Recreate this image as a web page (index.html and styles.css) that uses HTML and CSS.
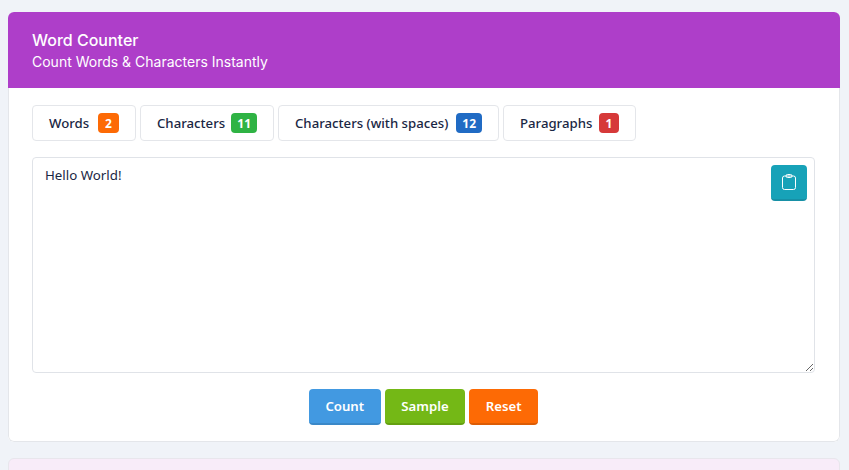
FILE: index.html
```html
<!DOCTYPE html>
<html lang="en">
<head>
<meta charset="utf-8">
<title>Word Counter</title>
<link rel="stylesheet" href="styles.css">
</head>
<body>
<main class="page">
  <section class="card">
    <header class="card-head">
      <h1 class="title">Word Counter</h1>
      <p class="subtitle">Count Words &amp; Characters Instantly</p>
    </header>
    <div class="card-body">
      <div class="stats">
        <div class="stat">Words <span class="badge orange">2</span></div>
        <div class="stat">Characters <span class="badge green">11</span></div>
        <div class="stat">Characters (with spaces) <span class="badge blue">12</span></div>
        <div class="stat">Paragraphs <span class="badge red">1</span></div>
      </div>
      <div class="editor">
        <textarea class="input" spellcheck="false">Hello World!</textarea>
        <button class="paste" type="button" aria-label="Paste">
          <svg width="16" height="18" viewBox="0 0 16 18" fill="none" stroke="currentColor" stroke-width="1" stroke-linejoin="round"><rect x="1.5" y="3" width="13" height="13.5" rx="2"/><rect x="5" y="1.5" width="6" height="3" rx="1.4"/></svg>
        </button>
      </div>
      <div class="actions">
        <button class="btn sky" type="button">Count</button>
        <button class="btn lime" type="button">Sample</button>
        <button class="btn flame" type="button">Reset</button>
      </div>
    </div>
  </section>
  <section class="next-card"></section>
</main>
</body>
</html>
```
FILE: styles.css
```css
* { box-sizing: border-box; }
html, body { margin: 0; height: 470px; overflow: hidden; }
body { background: #f0f3f8; font-family: "Noto Sans", sans-serif; color: #1a2744; }
.page { height: 470px; overflow: hidden; padding: 12px 9px 0 8px; display: flex; flex-direction: column; gap: 16px; }
.card { border-radius: 6px; overflow: hidden; height: 430px; flex: none; background: #fff; }
.card-head { background: #ae3ec9; color: #fff; height: 76px; padding: 18px 24px 0; font-family: Inter, sans-serif; }
.title { margin: 0; font-size: 16px; line-height: 20px; font-weight: 500; }
.subtitle { margin: 2px 0 0; font-size: 14px; line-height: 20px; font-weight: 400; }
.card-body { height: 354px; padding: 17px 24px 0 23px; border: 1px solid #e4e6ea; border-top: 0; border-radius: 0 0 6px 6px; }
.stats { display: grid; grid-template-columns: 104px 134px 221px 133px; gap: 4px; }
.stat { height: 36px; display: flex; align-items: center; justify-content: space-between; padding: 0 16px; background: #fff; border: 1px solid #e4e6ea; border-radius: 4px; font-size: 13.2px; font-weight: 500; white-space: nowrap; }
.badge { min-width: 20px; height: 20px; padding: 0 6px; display: flex; align-items: center; justify-content: center; border-radius: 4px; color: #fff; font-size: 12px; font-weight: 700; }
.orange { background: #fd6a05; min-width: 21px; }
.green { background: #2fb344; }
.blue { background: #206bc4; }
.red { background: #d63939; }
.editor { position: relative; margin-top: 16px; height: 216px; }
.input { display: block; width: 100%; height: 216px; padding: 7px 12px; border: 1px solid #e0e3e8; border-radius: 4px; background: #fff; color: #1a2744; font: 400 13.3px/20px "Noto Sans", sans-serif; outline: none; resize: vertical; }
.paste { position: absolute; top: 8px; right: 8px; width: 36px; height: 36px; padding: 0; display: flex; align-items: center; justify-content: center; border: 0; border-bottom: 2px solid #1790a6; border-radius: 4px; background: #17a2b8; color: #fff; }
.actions { display: flex; justify-content: center; gap: 4px; margin-top: 16px; }
.btn { height: 36px; padding: 0 16.6px; border: 0; border-bottom: 2px solid; border-radius: 4px; color: #fff; font: 600 13.2px "Noto Sans", sans-serif; }
.sky { background: #4299e1; border-color: #3a88c8; }
.lime { background: #74b816; border-color: #64a010; }
.flame { background: #fd6a05; border-color: #dd5c04; }
.next-card { height: 40px; flex: none; background: #f8ecf9; border: 1px solid #e8e6ec; border-radius: 6px; }
```
